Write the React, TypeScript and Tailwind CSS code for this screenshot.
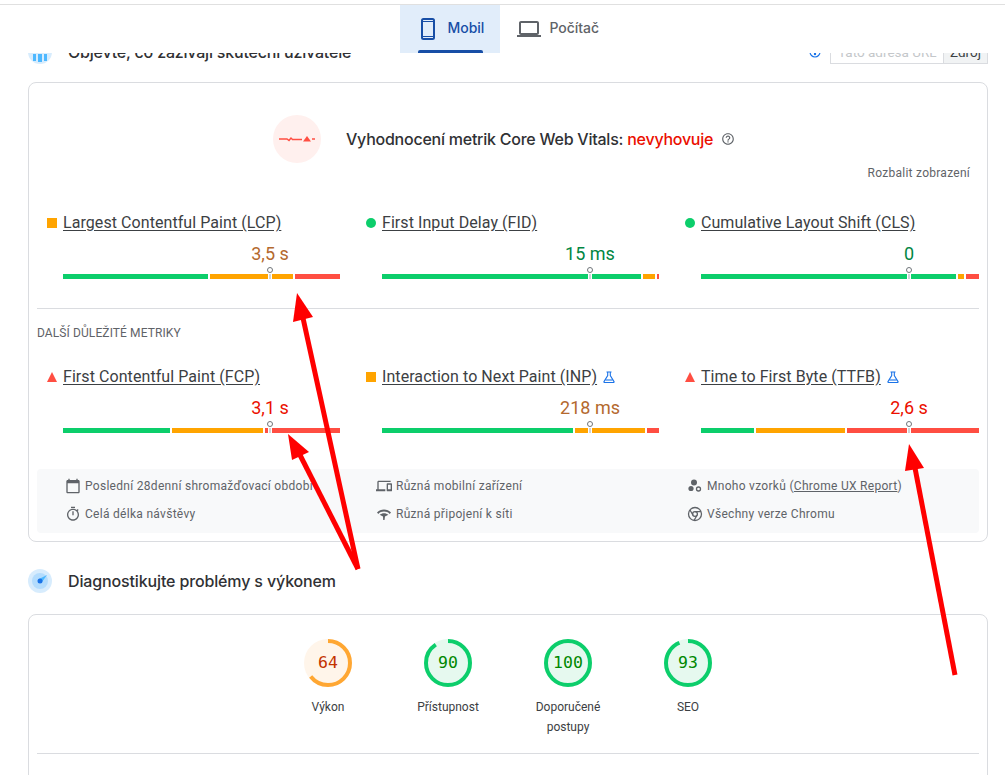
import React from 'react';

const GREEN = '#0cce6b';
const ORANGE = '#ffa400';
const RED = '#ff4e42';

type Rating = 'good' | 'average' | 'poor';

const metricsTop = [
  { title: 'Largest Contentful Paint (LCP)', value: '3,5 s', rating: 'average', segs: [145, 83, 45], marker: 207 },
  { title: 'First Input Delay (FID)', value: '15 ms', rating: 'good', segs: [259, 12, 2], marker: 208 },
  { title: 'Cumulative Layout Shift (CLS)', value: '0', rating: 'good', segs: [255, 6, 13], marker: 208 },
];

const metricsBottom = [
  { title: 'First Contentful Paint (FCP)', value: '3,1 s', rating: 'poor', segs: [107, 91, 75], marker: 207 },
  { title: 'Interaction to Next Paint (INP)', value: '218 ms', rating: 'average', segs: [191, 70, 12], marker: 208, lab: true },
  { title: 'Time to First Byte (TTFB)', value: '2,6 s', rating: 'poor', segs: [53, 89, 132], marker: 208, lab: true },
];

const gauges = [
  { score: 64, label: 'Výkon', color: '#ffa733', bg: 'bg-[#fff5ea]', text: 'text-[#c33300]' },
  { score: 90, label: 'Přístupnost', color: '#0cce6b', bg: 'bg-[#e6f9ef]', text: 'text-[#008800]' },
  { score: 100, label: 'Doporučené postupy', color: '#0cce6b', bg: 'bg-[#e6f9ef]', text: 'text-[#008800]' },
  { score: 93, label: 'SEO', color: '#0cce6b', bg: 'bg-[#e6f9ef]', text: 'text-[#008800]' },
];

const Icon = ({ d, className }: { d: string; className?: string }) => (
  <svg viewBox="0 0 24 24" fill="currentColor" className={className}>
    <path d={d} />
  </svg>
);

const RatingIcon = ({ rating }: { rating: string }) => {
  if (rating === 'good') return <span className="w-[10px] h-[10px] rounded-full bg-[#0cce6b]" />;
  if (rating === 'average') return <span className="w-[10px] h-[10px] bg-[#ffa400]" />;
  return (
    <svg viewBox="0 0 10 10" className="w-[10px] h-[10px]">
      <polygon points="5,0 10,10 0,10" fill={RED} />
    </svg>
  );
};

const Flask = () => (
  <svg viewBox="0 0 12 12" className="w-[12px] h-[12px] ml-[6px]" fill="none" stroke="#1a73e8" strokeWidth="1.1">
    <path d="M3.5 1h5M4.7 1v3.6L1 10.6c-.2.4 0 .9.5.9h9c.5 0 .7-.5.5-.9L7.3 4.6V1" />
    <path d="M2.5 9h7" />
  </svg>
);

const Metric = ({ m }: { m: any }) => {
  const colors = [GREEN, ORANGE, RED];
  const valueColor: Record<Rating, string> = {
    good: 'text-[#018642]',
    average: 'text-[#b4692e]',
    poor: 'text-[#eb0f00]',
  };
  return (
    <div>
      <div className="h-[24px] pt-[2px] flex items-center">
        <RatingIcon rating={m.rating} />
        <span className="ml-[6px] text-[16px] tracking-[0.07px] text-[#3c4043] underline underline-offset-[2px] whitespace-nowrap">{m.title}</span>
        {m.lab && <Flask />}
      </div>
      <div className="pl-[16px]">
        <div className="mt-[8px] h-[22px] flex items-center">
          <div style={{ marginLeft: m.marker }} className={`w-0 flex justify-center whitespace-nowrap text-[18px] ${valueColor[m.rating as Rating]}`}>
            {m.value}
          </div>
        </div>
        <div className="relative mt-[10px] flex gap-[2px] h-[5px]">
          {m.segs.map((w: number, i: number) => (
            <div key={i} className="h-full" style={{ width: w, background: colors[i] }} />
          ))}
          <div style={{ left: m.marker - 2 }} className="absolute top-0 h-[5px] w-[4px] bg-white flex justify-center">
            <div className="w-[2px] h-full bg-[#d0d4d8]" />
          </div>
          <div style={{ left: m.marker - 3 }} className="absolute top-[-7px] w-[6px] h-[6px] rounded-full border border-[#70757a] bg-white" />
        </div>
      </div>
    </div>
  );
};

const Gauge = ({ g }: { g: (typeof gauges)[number] }) => {
  const c = 2 * Math.PI * 22;
  return (
    <div className="w-[120px] flex flex-col items-center">
      <div className={`relative w-[48px] h-[48px] rounded-full ${g.bg} flex items-center justify-center`}>
        <svg viewBox="0 0 48 48" className="absolute inset-0 w-[48px] h-[48px] -rotate-90">
          <circle cx="24" cy="24" r="22" fill="none" stroke={g.color} strokeWidth="4" strokeDasharray={`${(g.score / 100) * c} ${c}`} />
        </svg>
        <span className={`pt-[1px] font-['DejaVu_Sans_Mono',monospace] text-[16.5px] ${g.text}`}>{g.score}</span>
      </div>
      <div className="mt-[10px] px-[12px] text-center text-[12px] leading-[20px] text-[#3c4043]">{g.label}</div>
    </div>
  );
};

const infoRow = 'flex items-center gap-[4px]';
const infoIcon = 'w-[16px] h-[16px] shrink-0 text-[#5f6368]';

export default function App() {
  return (
    <div className="relative h-[775px] overflow-hidden bg-white font-['Roboto',sans-serif]">
      {/* sticky tab bar */}
      <div className="absolute top-0 left-0 right-0 z-10 h-[53px] bg-white pt-[4px]">
        <div className="h-full border-t border-[#e0e0e0] flex justify-center pr-[1px]">
          <div className="relative w-[100px] h-full bg-[#e1edfa] flex items-center pl-[21px] gap-[13px] text-[#174ea6]">
            <svg viewBox="0 0 14 22" className="w-[14px] h-[22px]" fill="none" stroke="currentColor">
              <rect x="1" y="1" width="12" height="20" rx="1.500" strokeWidth="2" />
              <path d="M1 3.500h12M1 18.500h12" strokeWidth="1" />
            </svg>
            <span className="pb-[3px] text-[14px] font-medium font-['Inter',sans-serif] tracking-[-0.05px]">Mobil</span>
            <div className="absolute left-[18px] bottom-0 w-[65px] h-[3px] bg-[#174ea6] rounded-t-[2px]" />
          </div>
          <div className="w-[105px] h-full flex items-center pl-[17px] gap-[9px] text-[#5f6368]">
            <Icon className="w-[24px] h-[24px]" d="M20 18c1.1 0 1.99-.9 1.99-2L22 6c0-1.1-.9-2-2-2H4c-1.1 0-2 .9-2 2v10c0 1.1.9 2 2 2H0v2h24v-2h-4zM4 6h16v10H4V6z" />
            <span className="pb-[3px] text-[14px] font-medium font-['Inter',sans-serif] tracking-[-0.05px] whitespace-nowrap">Počítač</span>
          </div>
        </div>
      </div>

      <div className="pt-[40px] pl-[28px] w-[988px]">
        {/* field data heading, scrolled under the tabs */}
        <div className="h-[24px] flex items-center">
          <svg viewBox="0 0 24 24" className="w-[24px] h-[24px]">
            <circle cx="12" cy="12" r="12" fill="#d7ecfd" />
            <path d="M5 14h3v7H5zM10 14h4v8h-4zM16 14h3v7h-3z" fill="#4db8ff" />
          </svg>
          <span className="ml-[16px] text-[16px] font-medium font-['Inter',sans-serif] text-[#303134] tracking-[-0.2px]">Objevte, co zažívají skuteční uživatelé</span>
          <div className="ml-auto flex items-center">
            <svg viewBox="0 0 12 12" className="w-[12px] h-[12px] mr-[9px]" fill="#1a73e8" stroke="#1a73e8" strokeWidth="1.2">
              <circle cx="6" cy="6" r="5" fill="none" />
              <circle cx="6" cy="8" r="0.6" />
            </svg>
            <div className="w-[113px] h-[24px] border border-[#dadce0] border-r-0 pl-[7px] text-[13.5px] leading-[22px] text-[#c4c7ca] whitespace-nowrap overflow-hidden">Tato adresa URL</div>
            <div className="w-[45px] h-[24px] border border-[#dadce0] bg-[#f1f3f4] text-[13.5px] leading-[22px] text-center text-[#3c4043]">Zdroj</div>
          </div>
        </div>

        {/* field data card */}
        <div className="mt-[18px] h-[460px] border border-[#dadce0] rounded-[8px] px-[8px]">
          <div className="pt-[32px] h-[80px] flex items-center pl-[236px]">
            <div className="w-[48px] h-[48px] rounded-full bg-[#fff0ee] flex items-center justify-center">
              <svg viewBox="0 0 36 8" className="w-[36px] h-[8px]" fill="none" stroke={RED} strokeWidth="1.5">
                <path d="M0 4h8l2 1.500L12 3l1.500 1.500H23" />
                <polygon points="28,1 32,6.500 24,6.500" fill={RED} stroke="none" />
                <path d="M33 4h3" />
              </svg>
            </div>
            <div className="ml-[25px] text-[16px] font-medium font-['Inter',sans-serif] text-[#303134] tracking-[-0.24px] whitespace-nowrap">
              Vyhodnocení metrik Core Web Vitals: <span className="text-[#eb0f00]">nevyhovuje</span>
            </div>
            <Icon className="ml-[8px] w-[14px] h-[14px] text-[#5f6368]" d="M11 18h2v-2h-2v2zm1-16C6.48 2 2 6.48 2 12s4.48 10 10 10 10-4.48 10-10S17.52 2 12 2zm0 18c-4.410 0-8-3.590-8-8s3.590-8 8-8 8 3.590 8 8-3.590 8-8 8zm0-14c-2.210 0-4 1.790-4 4h2c0-1.100.9-2 2-2s2 .9 2 2c0 2-3 1.750-3 5h2c0-2.250 3-2.500 3-5 0-2.210-1.790-4-4-4z" />
          </div>
          <div className="mt-[1px] h-[18px] text-right pr-[9px] text-[12px] leading-[18px] text-[#5f6368] tracking-[0.26px]">Rozbalit zobrazení</div>

          <div className="mt-[28px] pl-[10px] grid grid-cols-[294px_294px_294px] gap-x-[25px]">
            {metricsTop.map((m) => <Metric key={m.title} m={m} />)}
          </div>
          <div className="mt-[29px] border-t border-[#dadce0]" />
          <div className="mt-[16px] h-[16px] text-[12px] leading-[16px] text-[#5f6368] tracking-[0.1px]">DALŠÍ DŮLEŽITÉ METRIKY</div>
          <div className="mt-[23px] pl-[10px] grid grid-cols-[294px_294px_294px] gap-x-[25px]">
            {metricsBottom.map((m) => <Metric key={m.title} m={m} />)}
          </div>

          <div className="mt-[36px] h-[64px] bg-[#f8f9fa] rounded-[4px] pt-[3px] pl-[28px] grid grid-cols-[311px_311px_1fr] grid-rows-[28px_28px] text-[12px] text-[#5f6368] tracking-[0.29px]">
            <div className={infoRow}>
              <Icon className={infoIcon} d="M20 3h-1V1h-2v2H7V1H5v2H4c-1.100 0-2 .9-2 2v16c0 1.100.9 2 2 2h16c1.100 0 2-.9 2-2V5c0-1.100-.9-2-2-2zm0 18H4V8h16v13z" />
              <span className="whitespace-nowrap">Poslední 28denní shromažďovací období</span>
            </div>
            <div className={infoRow}>
              <Icon className={infoIcon} d="M4 6h18V4H4c-1.100 0-2 .9-2 2v11H0v3h14v-3H4V6zm19 2h-6c-.55 0-1 .45-1 1v10c0 .55.45 1 1 1h6c.55 0 1-.45 1-1V9c0-.55-.45-1-1-1zm-1 9h-4v-7h4v7z" />
              <span>Různá mobilní zařízení</span>
            </div>
            <div className={infoRow}>
              <svg viewBox="0 0 16 16" className={infoIcon} fill="currentColor">
                <circle cx="7" cy="4.500" r="3" />
                <circle cx="4" cy="10.500" r="2.600" />
                <circle cx="11.500" cy="11" r="2" fill="none" stroke="currentColor" strokeWidth="1.300" />
              </svg>
              <span>Mnoho vzorků (<span className="underline">Chrome UX Report</span>)</span>
            </div>
            <div className={infoRow}>
              <Icon className={infoIcon} d="M15 1H9v2h6V1zm-4 13h2V8h-2v6zm8.030-6.610l1.420-1.420c-.43-.51-.9-.99-1.410-1.410l-1.420 1.420C16.070 4.740 14.120 4 12 4c-4.970 0-9 4.030-9 9s4.020 9 9 9 9-4.030 9-9c0-2.120-.74-4.070-1.970-5.610zM12 20c-3.870 0-7-3.130-7-7s3.130-7 7-7 7 3.130 7 7-3.130 7-7 7z" />
              <span>Celá délka návštěvy</span>
            </div>
            <div className={infoRow}>
              <svg viewBox="0 0 16 16" className={infoIcon} fill="currentColor">
                <path d="M1 6.500C4.500 2.500 11.500 2.500 15 6.500l-1.300 1.400C10.800 4.800 5.200 4.800 2.300 7.900zM3.600 8.800c2.500-2.200 6.300-2.200 8.800 0L9 10.500 8.500 14H7.200l-.2-3.500z" />
              </svg>
              <span>Různá připojení k síti</span>
            </div>
            <div className={infoRow}>
              <svg viewBox="0 0 16 16" className={infoIcon} fill="none" stroke="currentColor" strokeWidth="1.300">
                <circle cx="8" cy="8" r="6.500" />
                <circle cx="8" cy="8" r="2.400" />
                <path d="M8 5.600h6M6 9.300L3 4M10 9.300l-3 5.200" />
              </svg>
              <span>Všechny verze Chromu</span>
            </div>
          </div>
        </div>

        {/* diagnostics heading */}
        <div className="mt-[27px] h-[24px] flex items-center">
          <svg viewBox="0 0 24 24" className="w-[24px] h-[24px]">
            <circle cx="12" cy="12" r="12" fill="#d7ecfd" />
            <circle cx="12" cy="12" r="8" fill="#b3dcfd" />
            <path d="M19 6L11 10l3 3z" fill="#4db8ff" />
            <circle cx="12" cy="12" r="2.500" fill="#1a73e8" />
          </svg>
          <span className="ml-[16px] text-[16px] font-medium font-['Inter',sans-serif] text-[#303134] tracking-[-0.14px]">Diagnostikujte problémy s výkonem</span>
        </div>

        {/* lab data card */}
        <div className="mt-[21px] h-[300px] border border-[#dadce0] rounded-[8px] px-[8px] pt-[24px]">
          <div className="flex justify-center border-b border-[#dadce0] pb-[16px]">
            {gauges.map((g) => <Gauge key={g.label} g={g} />)}
          </div>
        </div>
      </div>

      {/* hand-drawn arrows on top of the screenshot */}
      <svg className="absolute inset-0 z-20 w-[1005px] h-[775px] pointer-events-none">
        <g fill="#ff0000" stroke="#ff0000" strokeWidth="5">
          <line x1="358" y1="569" x2="303" y2="318" />
          <line x1="358" y1="569" x2="300" y2="455" />
          <line x1="955" y1="675" x2="915" y2="468" />
        </g>
        <g fill="#ff0000">
          <polygon points="297,293 313,317 293,322" />
          <polygon points="288,434 309,452 292,460" />
          <polygon points="909,444 924,468 905,471" />
        </g>
      </svg>
    </div>
  );
}
